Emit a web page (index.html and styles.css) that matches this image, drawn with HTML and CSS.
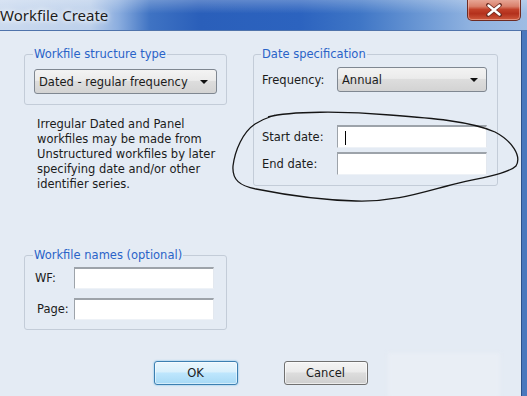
FILE: index.html
```html
<!DOCTYPE html>
<html>
<head>
<meta charset="utf-8">
<link rel="stylesheet" href="styles.css">
</head>
<body>
<div class="window">
  <div class="titlebar">
    <span class="title">Workfile Create</span>
    <div class="close">
      <svg width="18" height="14" viewBox="0 0 18 14"><path d="M3 2 L15 12 M15 2 L3 12" stroke="#6a2a20" stroke-width="3.8" stroke-linecap="round"/><path d="M3.5 2.5 L14.5 11.5 M14.5 2.5 L3.5 11.5" stroke="#ffffff" stroke-width="2.4" stroke-linecap="round"/></svg>
    </div>
  </div>
  <div class="client">
    <div class="columns">
      <div class="col-left">
        <fieldset class="group g-structure">
          <legend>Workfile structure type</legend>
          <div class="combo combo-structure"><span>Dated - regular frequency</span><i class="arrow"></i></div>
        </fieldset>
        <p class="note">Irregular Dated and Panel workfiles may be made from Unstructured workfiles by later specifying date and/or other identifier series.</p>
        <fieldset class="group g-names">
          <legend>Workfile names (optional)</legend>
          <div class="row"><label class="lbl-short">WF:</label><div class="input"></div></div>
          <div class="row"><label class="lbl-short lbl-page">Page:</label><div class="input"></div></div>
        </fieldset>
      </div>
      <div class="col-right">
        <fieldset class="group g-date">
          <legend>Date specification</legend>
          <div class="row"><label class="lbl-long">Frequency:</label><div class="combo combo-freq"><span>Annual</span><i class="arrow"></i></div></div>
          <div class="row row-start"><label class="lbl-long">Start date:</label><div class="input input-date"><i class="caret"></i></div></div>
          <div class="row row-end"><label class="lbl-long">End date:</label><div class="input input-date"></div></div>
        </fieldset>
      </div>
    </div>
    <div class="buttons">
      <button class="btn btn-default">OK</button>
      <button class="btn">Cancel</button>
    </div>
    <div class="glare"></div>
  </div>
  <svg class="scribble" width="527" height="396" viewBox="0 0 527 396">
    <path d="M268 117 C 290 111, 345 111, 390 115 C 430 118, 470 121, 495 132 C 512 141, 522 156, 516 166 C 508 174, 478 178, 447 186 C 417 194, 392 202, 356 201 C 320 200, 286 195, 256 189 C 240 186, 232 180, 233 166 C 235 150, 243 132, 255 124 C 260 121, 266 118, 275 115" fill="none" stroke="#151515" stroke-width="1.3"/>
  </svg>
</div>
</body>
</html>
```
FILE: styles.css
```css
html, body {
  margin: 0;
  padding: 0;
}
body {
  width: 527px;
  height: 396px;
  overflow: hidden;
  font-family: "DejaVu Sans", sans-serif;
  font-size: 11px;
  color: #1b1b1b;
}
.window {
  position: relative;
  width: 527px;
  height: 396px;
  display: flex;
  flex-direction: column;
  background: #4a78bd;
}
.titlebar {
  height: 30px;
  flex: none;
  display: flex;
  align-items: center;
  position: relative;
  background:
    linear-gradient(180deg, rgba(255,255,255,0.25) 0%, rgba(255,255,255,0) 45%),
    linear-gradient(90deg, #cbdaef 0px, #bcd0eb 90px, #8caedf 118px, #3f73c3 150px, #2a5fba 200px, #2c63bf 300px, #3f76c6 360px, #6a97d4 420px, #8fb2e0 470px, #9ebce3 527px);
  border-bottom: 1px solid #4f73ab;
}
.title {
  font-family: "Noto Sans", sans-serif;
  font-size: 15px;
  color: #1c1c1c;
  margin-top: -1px;
  text-shadow: 0 0 8px #ffffff, 0 0 4px #ffffff;
}
.close {
  position: absolute;
  left: 467px;
  top: -1px;
  width: 54px;
  height: 22px;
  box-sizing: border-box;
  border: 1px solid #6e2b22;
  border-top: none;
  border-radius: 0 0 5px 5px;
  background: linear-gradient(180deg, #e9ab9b 0%, #d9806b 35%, #c2412a 50%, #b3301c 70%, #cf5a3d 100%);
  box-shadow: inset 0 0 0 1px rgba(255,210,200,0.45);
  display: flex;
  align-items: center;
  justify-content: center;
}
.client {
  flex: 1;
  position: relative;
  background: #e4ebf4;
  margin-right: 5px;
  border-right: 1px solid #2c518a;
  display: flex;
  flex-direction: column;
}
.columns {
  display: flex;
  gap: 26px;
  padding: 16px 0 0 24px;
}
.col-left {
  width: 203px;
  display: flex;
  flex-direction: column;
}
.col-right {
  width: 245px;
}
.group {
  margin: 0;
  border: 1px solid #c3ccd8;
  border-radius: 3px;
  min-width: 0;
}
.group legend {
  color: #2a63c8;
  padding: 0 1px;
  margin-left: -1px;
  line-height: 14px;
  font-size: 11.5px;
}
.g-structure {
  padding: 8px 9px 10px 9px;
}
.combo {
  height: 25px;
  box-sizing: border-box;
  border: 1px solid #7f8791;
  border-radius: 3px;
  background: linear-gradient(180deg, #f3f3f3 0%, #ebebeb 45%, #dddddd 50%, #d3d3d3 100%);
  display: flex;
  align-items: center;
  justify-content: space-between;
  padding: 0 8px 0 4px;
  font-size: 11.5px;
}
.arrow {
  width: 0;
  height: 0;
  border-left: 4px solid transparent;
  border-right: 4px solid transparent;
  border-top: 4px solid #111;
}
.note {
  margin: 12px 0 0 13px;
  line-height: 15px;
  font-size: 11.5px;
  width: 185px;
}
.g-names {
  margin-top: 56px;
  padding: 5px 12px 9px 9px;
}
.row {
  display: flex;
  align-items: center;
}
.g-names .row + .row {
  margin-top: 9px;
}
.lbl-short {
  width: 40px;
  box-sizing: border-box;
  padding-left: 1px;
  font-size: 11.5px;
}
.lbl-page {
  padding-left: 3px;
}
.input {
  flex: 1;
  height: 22px;
  box-sizing: border-box;
  background: #ffffff;
  border: 1px solid;
  border-color: #9da3aa #e3e8ef #eef2f7 #9da3aa;
  border-top-width: 2px;
  position: relative;
}
.g-date {
  padding: 6px 10px 10px 8px;
}
.lbl-long {
  width: 75px;
  font-size: 11.5px;
}
.combo-freq {
  flex: 1;
}
.row-start {
  margin-top: 33px;
}
.row-end {
  margin-top: 4px;
}
.input-date {
  height: 23px;
}
.caret {
  position: absolute;
  left: 7px;
  top: 4px;
  width: 1px;
  height: 14px;
  background: #000;
}
.buttons {
  display: flex;
  justify-content: center;
  gap: 46px;
  margin-top: 31px;
  position: relative;
  z-index: 1;
}
.btn {
  width: 84px;
  height: 24px;
  box-sizing: border-box;
  border: 1px solid #707070;
  border-radius: 3px;
  background: linear-gradient(180deg, #f4f4f4 0%, #ebebeb 45%, #dddddd 50%, #cfcfcf 100%);
  font-family: "DejaVu Sans", sans-serif;
  font-size: 11.5px;
  color: #1b1b1b;
  padding: 0;
  box-shadow: inset 0 0 0 1px rgba(255,255,255,0.6);
}
.btn-default {
  border-color: #3c7fb1;
  background: linear-gradient(180deg, #eaf6fd 0%, #d9f0fc 45%, #bee6fd 50%, #a7d9f5 100%);
  box-shadow: inset 0 0 0 1px rgba(255,255,255,0.5), 0 0 2px #62b6e6;
}
.glare {
  position: absolute;
  left: 388px;
  top: 322px;
  width: 112px;
  height: 45px;
  background: #e9eef5;
  filter: blur(2px);
}
.scribble {
  position: absolute;
  left: 0;
  top: 0;
  pointer-events: none;
}
```
